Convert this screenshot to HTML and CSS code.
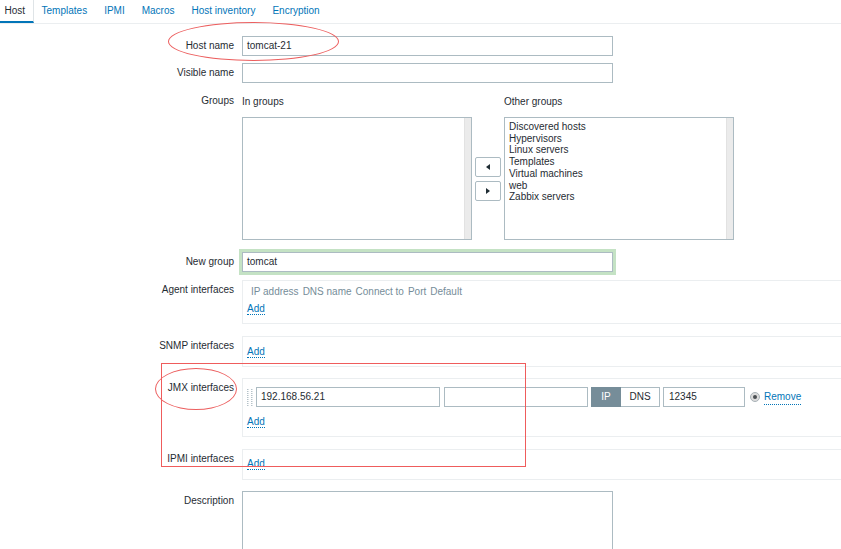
FILE: index.html
```html
<!DOCTYPE html>
<html>
<head>
<meta charset="utf-8">
<link rel="stylesheet" href="styles.css">
</head>
<body>
<div class="page">
  <nav class="tabs">
    <span class="tab active">Host</span>
    <a class="tab">Templates</a>
    <a class="tab">IPMI</a>
    <a class="tab">Macros</a>
    <a class="tab">Host inventory</a>
    <a class="tab">Encryption</a>
  </nav>

  <div class="form">
    <div class="row row-host">
      <div class="lbl lbl-mid">Host name</div>
      <div class="field"><div class="txt w-wide">tomcat-21</div></div>
    </div>
    <div class="row row-visible">
      <div class="lbl lbl-mid">Visible name</div>
      <div class="field"><div class="txt w-wide"></div></div>
    </div>
    <div class="row row-groups">
      <div class="lbl lbl-top">Groups</div>
      <div class="field groups">
        <div class="g-head">In groups</div>
        <div></div>
        <div class="g-head">Other groups</div>
        <div class="listbox"><div class="lb-items"></div><div class="lb-scroll"></div></div>
        <div class="arrows">
          <div class="abtn"><span class="tri tri-left"></span></div>
          <div class="abtn"><span class="tri tri-right"></span></div>
        </div>
        <div class="listbox">
          <div class="lb-items">
            <div>Discovered hosts</div>
            <div>Hypervisors</div>
            <div>Linux servers</div>
            <div>Templates</div>
            <div>Virtual machines</div>
            <div>web</div>
            <div>Zabbix servers</div>
          </div>
          <div class="lb-scroll"></div>
        </div>
      </div>
    </div>
    <div class="row row-newgroup">
      <div class="lbl lbl-mid">New group</div>
      <div class="field"><div class="txt w-wide focus">tomcat</div></div>
    </div>
    <div class="row row-agent">
      <div class="lbl lbl-box">Agent interfaces</div>
      <div class="field">
        <div class="box box-agent">
          <div class="if-head"><span>IP address</span><span>DNS name</span><span>Connect to</span><span>Port</span><span>Default</span></div>
          <div class="add-line add-agent"><span class="link">Add</span></div>
        </div>
      </div>
    </div>
    <div class="row row-snmp">
      <div class="lbl lbl-box">SNMP interfaces</div>
      <div class="field">
        <div class="box box-snmp">
          <div class="add-line"><span class="link">Add</span></div>
        </div>
      </div>
    </div>
    <div class="row row-jmx">
      <div class="lbl lbl-box">JMX interfaces</div>
      <div class="field">
        <div class="box box-jmx">
          <div class="if-row">
            <svg class="handle" width="6" height="17" viewBox="0 0 6 17">
              <g fill="#b5c2c9">
                <rect x="0" y="0" width="1.5" height="1"/><rect x="4" y="0" width="1.5" height="1"/>
                <rect x="0" y="2" width="1.5" height="1"/><rect x="4" y="2" width="1.5" height="1"/>
                <rect x="0" y="4" width="1.5" height="1"/><rect x="4" y="4" width="1.5" height="1"/>
                <rect x="0" y="6" width="1.5" height="1"/><rect x="4" y="6" width="1.5" height="1"/>
                <rect x="0" y="8" width="1.5" height="1"/><rect x="4" y="8" width="1.5" height="1"/>
                <rect x="0" y="10" width="1.5" height="1"/><rect x="4" y="10" width="1.5" height="1"/>
                <rect x="0" y="12" width="1.5" height="1"/><rect x="4" y="12" width="1.5" height="1"/>
                <rect x="0" y="14" width="1.5" height="1"/><rect x="4" y="14" width="1.5" height="1"/>
                <rect x="0" y="16" width="1.5" height="1"/><rect x="4" y="16" width="1.5" height="1"/>
              </g>
            </svg>
            <div class="txt w-ip">192.168.56.21</div>
            <div class="txt w-dns"></div>
            <div class="toggle"><span class="tg tg-on">IP</span><span class="tg tg-off">DNS</span></div>
            <div class="txt w-port">12345</div>
            <span class="radio"><span class="radio-dot"></span></span>
            <span class="link remove">Remove</span>
          </div>
          <div class="add-line add-jmx"><span class="link">Add</span></div>
        </div>
      </div>
    </div>
    <div class="row row-ipmi">
      <div class="lbl lbl-box">IPMI interfaces</div>
      <div class="field">
        <div class="box box-ipmi">
          <div class="add-line add-ipmi"><span class="link">Add</span></div>
        </div>
      </div>
    </div>
    <div class="row row-desc">
      <div class="lbl lbl-desc">Description</div>
      <div class="field"><div class="textarea"></div></div>
    </div>
  </div>

  <div class="mark ellipse-host"></div>
  <div class="mark rect-jmx"></div>
  <div class="mark ellipse-jmx"></div>
</div>
</body>
</html>
```

FILE: styles.css
```css
* { box-sizing: border-box; }
html, body { margin: 0; padding: 0; background: #fff; }
body {
  font-family: "Liberation Sans", Arial, sans-serif;
  font-size: 10px;
  color: #1f2c33;
  overflow: hidden;
  width: 841px;
  height: 549px;
}
.page { position: relative; width: 841px; height: 549px; overflow: hidden; }

/* tabs */
.tabs {
  display: flex;
  height: 24px;
  border-bottom: 1px solid #ebeef0;
  margin-left: -4px;
}
.tab {
  display: block;
  height: 23px;
  line-height: 21px;
  padding: 0 8px;
  color: #0275b8;
  border-bottom: 2px solid transparent;
  border-right: 1px solid transparent;
  white-space: nowrap;
}
.tab.active {
  color: #1f2c33;
  border-bottom-color: #0275b8;
  border-right-color: #dfe4e7;
  padding-left: 8.5px;
  padding-right: 7.5px;
}

/* form rows */
.form { display: flex; flex-direction: column; }
.row { display: flex; align-items: flex-start; }
.lbl { width: 234px; flex: none; text-align: right; white-space: nowrap; }
.lbl-mid { line-height: 20px; }
.lbl-top { line-height: 14px; }
.lbl-box { line-height: 14px; padding-top: 3px; }
.lbl-desc { line-height: 14px; padding-top: 3px; }
.field { margin-left: 8px; flex: 1; min-width: 0; }

.row-host { margin-top: 12px; }
.row-visible { margin-top: 7px; }
.row-groups { margin-top: 11px; }
.row-newgroup { margin-top: 12px; }
.row-agent { margin-top: 8px; }
.row-snmp { margin-top: 12px; }
.row-jmx { margin-top: 11px; }
.row-ipmi { margin-top: 12px; }
.row-desc { margin-top: 11px; }

/* text inputs */
.txt {
  height: 20px;
  line-height: 18px;
  border: 1px solid #acbbc2;
  background: #fff;
  padding: 0 4px;
  white-space: nowrap;
  overflow: hidden;
}
.w-wide { width: 371px; }
.txt.focus { box-shadow: 0 0 0 3px #c4e2c4; }

/* groups */
.groups {
  display: grid;
  grid-template-columns: 230px 32px 230px;
  grid-template-rows: 14px 123px;
  row-gap: 9px;
}
.g-head { line-height: 14px; padding-top: 1px; }
.listbox {
  display: flex;
  border: 1px solid #acbbc2;
  background: #fff;
}
.lb-items {
  flex: 1;
  padding: 3px 4px 2px;
  line-height: 11.7px;
}
.lb-scroll {
  width: 7px;
  background: #ebebeb;
  border-left: 1px solid #e2e2e2;
}
.arrows {
  display: flex;
  flex-direction: column;
  justify-content: center;
  align-items: center;
  gap: 4px;
}
.abtn {
  width: 26px;
  height: 20px;
  border: 1px solid #acbbc2;
  border-radius: 2px;
  background: #fff;
  display: flex;
  align-items: center;
  justify-content: center;
}
.tri { width: 0; height: 0; border-top: 3px solid transparent; border-bottom: 3px solid transparent; }
.tri-left { border-right: 4px solid #1f2c33; }
.tri-right { border-left: 4px solid #1f2c33; }

/* interface boxes */
.box {
  width: 640px;
  border: 1px solid #ebeef0;
  border-right: none;
  background: #fff;
}
.box-agent { height: 44px; padding-top: 4px; }
.box-snmp { height: 31px; padding-top: 8px; }
.box-jmx { height: 59px; padding-top: 8px; }
.box-ipmi { height: 31px; padding-top: 7px; }

.if-head {
  display: flex;
  gap: 4px;
  padding-left: 8px;
  line-height: 14px;
  color: #768d99;
}
.add-line { line-height: 14px; padding-left: 4px; }
.add-agent { margin-top: 3px; }
.add-jmx { margin-top: 8px; }
.link { color: #0275b8; border-bottom: 1px dotted #0275b8; }

.if-row { display: flex; align-items: center; height: 20px; padding-left: 4px; }
.handle { flex: none; margin-right: 3px; }
.w-ip { width: 184px; }
.w-dns { width: 144px; margin-left: 4px; }
.toggle { display: flex; margin-left: 3px; height: 20px; }
.tg { display: block; height: 20px; line-height: 18px; text-align: center; border: 1px solid #acbbc2; }
.tg-on { width: 30px; background: #768d99; border-color: #768d99; color: #fff; }
.tg-off { width: 39px; border-left: none; background: #fff; }
.w-port { width: 82px; margin-left: 3px; padding-left: 5px; }
.radio {
  width: 10px; height: 10px;
  margin-left: 5px;
  border-radius: 50%;
  border: 1px solid #a9b3b8;
  background: #dcdcdc;
  display: flex; align-items: center; justify-content: center;
}
.radio-dot { width: 4px; height: 4px; border-radius: 50%; background: #4a4f52; }
.remove { margin-left: 4px; line-height: 14px; }

.textarea {
  width: 371px;
  height: 80px;
  border: 1px solid #acbbc2;
  background: #fff;
}

/* annotations drawn over the screenshot */
.mark { position: absolute; pointer-events: none; }
.ellipse-host {
  left: 168px; top: 22px; width: 171px; height: 39px;
  border: 1px solid #ec5f5f;
  border-radius: 50%;
}
.rect-jmx {
  left: 161px; top: 363px; width: 365px; height: 104px;
  border: 1px solid #ef5c5c;
}
.ellipse-jmx {
  left: 155px; top: 368px; width: 82px; height: 42px;
  border: 1px solid #ec5f5f;
  border-radius: 50%;
}
```
